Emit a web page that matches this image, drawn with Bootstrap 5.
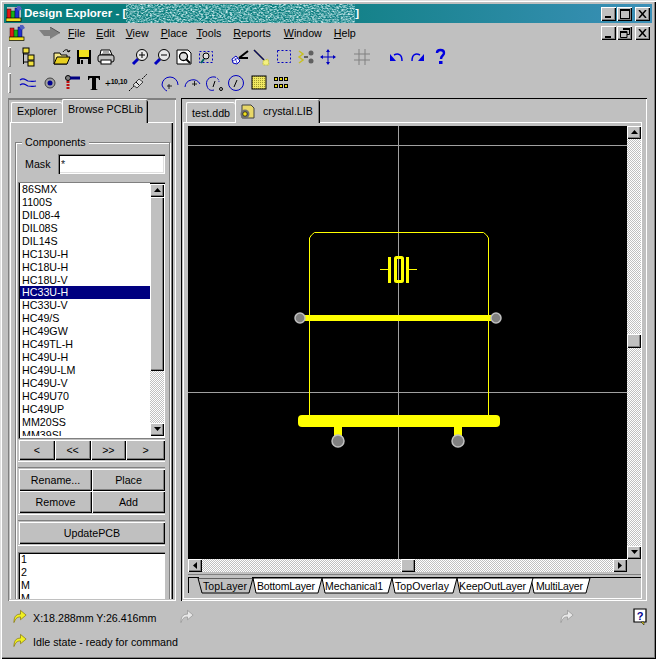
<!DOCTYPE html>
<html lang="en">
<head>
<meta charset="UTF-8">
<title>Design Explorer</title>
<link rel="stylesheet" href="https://cdn.jsdelivr.net/npm/bootstrap@5.3.0/dist/css/bootstrap.min.css">
<style>
html, body { margin: 0; background: #c0c0c0; overflow: hidden; }
body { width: 656px; height: 659px; font: 10.7px/13px "Liberation Sans", Arial, sans-serif; color: #000; }
svg { display: block; flex: none; }
.app-win { width: 656px; height: 659px; padding: 4px; background: #c0c0c0; box-shadow: inset 1px 1px 0 #dfdfdf, inset 2px 2px 0 #fff, inset -1px -1px 0 #000, inset -2px -2px 0 #808080; }
.raised { background: #c0c0c0; box-shadow: inset 1px 1px 0 #fff, inset -1px -1px 0 #000, inset -2px -2px 0 #808080; }

.title-bar { height: 19px; margin-bottom: 1px; padding: 0 2px; background: linear-gradient(90deg, #087d7c 0%, #0d7f80 45%, #3b90b8 100%); color: #fff; font-weight: 700; font-size: 11.5px; line-height: 19px; }
.caption-btn { width: 15px; height: 14px; margin-left: 1px; padding: 0; border: 0; border-radius: 0; display: flex; align-items: center; justify-content: center; }
.caption-btn.gap-left { margin-left: 3px; }

.menu-row { height: 18px; padding: 0 2px 0 5px; }
.menu-item u { text-decoration: underline; }

.tool-row { padding-left: 4px; }
.grip { width: 3px; height: 20px; margin-right: 6px; box-shadow: inset 1px 1px 0 #fff, inset -1px -1px 0 #808080; }
.tool-cell { width: 22px; height: 22px; flex: none; }
.tool-gap { width: 12px; flex: none; }

.panes { height: 503px; margin-top: 3px; }
.pane-left { width: 168px; margin-left: 4px; margin-right: 5px; padding: 0 3px 2px 2px; box-shadow: inset 0 2px 0 #808080, inset 1px 0 0 #808080, inset 0 -1px 0 #fff, inset -1px 0 0 #fff; }
.pane-right { width: 466px; padding: 0 5px 2px 2px; box-shadow: inset 0 1px 0 #000, inset 1px 0 0 #000, inset 0 -1px 0 #fff, inset -1px 0 0 #fff; }

.doc-tabs { height: 24px; padding: 3px 0 0 1px; border: 0; flex-wrap: nowrap; align-items: flex-end; }
.doc-tab { height: 20px; padding: 3px 6px 0; background: #c0c0c0; border-radius: 2px 2px 0 0; box-shadow: inset 1px 0 0 #fff, inset 0 1px 0 #fff; white-space: nowrap; }
.doc-tab.on { height: 24px; margin-bottom: -1px; padding: 5px 6px 0; position: relative; box-shadow: inset 1px 0 0 #fff, inset 0 1px 0 #fff, inset -1px 0 0 #000, inset -2px 0 0 #808080; }
.tab-page { height: 479px; box-shadow: inset 1px 1px 0 #fff, inset -1px 0 0 #000, inset -2px 0 0 #808080; overflow: hidden; }

.comp-group { margin: 20px 0 0 5px; width: 155px; height: 470px; padding: 11px 4px 0 2px; position: relative; border: 1px solid #808080; box-shadow: 1px 1px 0 #fff, inset 1px 1px 0 #fff; }
.comp-legend { position: absolute; top: -7px; left: 6px; padding: 0 3px; background: #c0c0c0; }
.mask-row { height: 20px; }
.mask-input { width: 107px; height: 20px; margin-left: auto; padding: 1px 3px; border: 0; border-radius: 0; font: inherit; box-shadow: inset 1px 1px 0 #808080, inset 2px 2px 0 #000, inset -1px -1px 0 #fff, inset -2px -2px 0 #dfdfdf; }
.list-well { margin-top: 8px; height: 256px; padding: 2px 1px 2px 2px; background: #fff; box-shadow: inset 1px 1px 0 #808080, inset 2px 2px 0 #000, inset -1px -1px 0 #fff; overflow: hidden; }
.comp-list { flex: 1; margin-top: -1px; border-radius: 0; overflow: hidden; }
.comp-item { padding: 0 2px; height: 13px; border: 0; border-radius: 0; background: #fff; color: #000; font-size: inherit; line-height: 13px; white-space: nowrap; }
.comp-item.active { background: #000080; color: #fff; }

.scroll-v { width: 14px; }
.scroll-h { height: 13px; }
.scroll-track { flex: 1; min-width: 0; min-height: 0; background: conic-gradient(#fff 25%, #c0c0c0 0 50%, #fff 0 75%, #c0c0c0 0) 0 0 / 2px 2px; }
.scroll-btn { width: 14px; height: 13px; flex: none; display: flex; align-items: center; justify-content: center; }
.scroll-thumb { flex: none; }

.act-frame { margin-top: 1px; padding: 1px 0 1px 1px; box-shadow: 0 -1px 0 #808080, 0 1px 0 #fff; }
.act-btn { flex: 1 1 0; height: 20px; padding: 0; border: 0; border-radius: 0; font: inherit; color: #000; background: #c0c0c0; box-shadow: inset 1px 1px 0 #fff, inset -1px -1px 0 #000, inset -2px -2px 0 #808080; }
.act-btn:hover { background: #c0c0c0; color: #000; }
.act-tall { height: 22px; }
.pin-well { height: 48px; margin-top: 7px; padding: 1px 3px; background: #fff; box-shadow: inset 1px 1px 0 #808080, inset 2px 2px 0 #000; overflow: hidden; }

.doc-page { height: 479px; padding: 4px 0 0 5px; box-shadow: inset 1px 1px 0 #fff, inset -1px -1px 0 #fff; }
.canvas-box { width: 453px; }

.status-bar { height: 52px; padding: 3px 5px 0 9px; }
.status-line { height: 24px; }
.status-text { margin-left: 5px; padding-top: 4px; width: 147px; font-size: 10.7px; white-space: nowrap; }
</style>
</head>
<body>
<svg width="0" height="0" style="position:absolute">
  <defs>
    <filter id="title-grain" x="0" y="0" width="100%" height="100%">
      <feTurbulence type="fractalNoise" baseFrequency=".45 .7" numOctaves="2" seed="7"/>
      <feColorMatrix values="0 0 0 0 .55  0 0 0 0 .8  0 0 0 0 .82  2.400 0 0 0 -.85"/>
    </filter>
    <symbol id="ico-logo" viewBox="0 0 16 16">
      <rect x="1" y="1" width="14" height="14" fill="#c0c0c0"/>
      <rect x="1" y="3" width="4" height="10" fill="#e01818" stroke="#400" stroke-width=".5"/>
      <rect x="5" y="5" width="4" height="8" fill="#18b018" stroke="#040" stroke-width=".5"/>
      <rect x="9" y="2" width="4" height="11" fill="#2030d0" stroke="#004" stroke-width=".5"/>
      <rect x="0" y="12" width="15" height="3.5" fill="#f0e020" stroke="#000" stroke-width=".7"/>
      <path d="M11 0h3l2 3-3 2-2-2z" fill="#5060c0"/>
    </symbol>
    <symbol id="ico-flow" viewBox="0 0 16 16">
      <path d="M1 15C1 9 3 6 8 6V2l6 5-6 5V9c-3 0-5 1-7 6z"/>
    </symbol>
    <symbol id="ico-up" viewBox="0 0 7 5"><path d="M3.500 0L7 4H0z"/></symbol>
    <symbol id="ico-down" viewBox="0 0 7 5"><path d="M0 0h7L3.500 4z"/></symbol>
    <symbol id="ico-left" viewBox="0 0 5 7"><path d="M4 0v7L0 3.500z"/></symbol>
    <symbol id="ico-right" viewBox="0 0 5 7"><path d="M0 0v7l4-3.500z"/></symbol>
    <symbol id="ico-glass" viewBox="0 0 22 22">
      <path d="M4 18l5-5" stroke="#0000c0" stroke-width="3"/>
      <circle cx="13" cy="9" r="5.500" fill="#e8e8e8" stroke="#000"/>
    </symbol>
    <symbol id="ico-arc" viewBox="0 0 22 22">
      <circle cx="11" cy="11" r="7.500" fill="none" stroke="#0000c0"/>
    </symbol>
  </defs>
</svg>

<div class="app-win d-flex flex-column">

  <div class="title-bar d-flex align-items-center">
    <svg width="16" height="16" style="margin-right:2px"><use href="#ico-logo"/></svg>
    <span>Design Explorer - [</span>
    <svg width="229" height="19"><rect width="229" height="19" filter="url(#title-grain)"/></svg>
    <span>]</span>
    <div class="ms-auto d-flex">
      <button class="btn caption-btn raised" aria-label="Minimize"><svg width="9" height="9"><rect x="1" y="7" width="6" height="2"/></svg></button>
      <button class="btn caption-btn raised" aria-label="Maximize"><svg width="10" height="10"><rect x=".5" y=".5" width="9" height="9" fill="none" stroke="#000"/><rect x="0" y="0" width="10" height="2"/></svg></button>
      <button class="btn caption-btn gap-left raised" aria-label="Close"><svg width="9" height="8"><path d="M1 0l7 8M8 0L1 8" stroke="#000" stroke-width="1.500"/></svg></button>
    </div>
  </div>

  <div class="menu-row d-flex align-items-center">
    <svg width="16" height="16" style="margin-right:14px"><use href="#ico-logo"/></svg>
    <svg width="22" height="12" style="margin-right:7px"><path d="M0 3h11V0l10 6-10 6V9H5z" fill="#808080"/><path d="M11 0l10 6" stroke="#555"/></svg>
    <span class="menu-item" style="margin-right:11px"><u>F</u>ile</span>
    <span class="menu-item" style="margin-right:11px"><u>E</u>dit</span>
    <span class="menu-item" style="margin-right:12px"><u>V</u>iew</span>
    <span class="menu-item" style="margin-right:9px"><u>P</u>lace</span>
    <span class="menu-item" style="margin-right:12px"><u>T</u>ools</span>
    <span class="menu-item" style="margin-right:13px"><u>R</u>eports</span>
    <span class="menu-item" style="margin-right:12px"><u>W</u>indow</span>
    <span class="menu-item"><u>H</u>elp</span>
    <div class="ms-auto d-flex">
      <button class="btn caption-btn raised" aria-label="Minimize"><svg width="9" height="9"><rect x="1" y="7" width="6" height="2"/></svg></button>
      <button class="btn caption-btn raised" aria-label="Restore"><svg width="10" height="10"><path d="M3 .5h6.500v6H7M.5 3.500h6.500v6H.5z" fill="none" stroke="#000"/><path d="M3 0h7v2H3zM0 3h7v2H0z"/></svg></button>
      <button class="btn caption-btn gap-left raised" aria-label="Close"><svg width="9" height="8"><path d="M1 0l7 8M8 0L1 8" stroke="#000" stroke-width="1.500"/></svg></button>
    </div>
  </div>

  <div class="tool-row d-flex align-items-center" style="height:29px">
    <div class="grip"></div>
    <svg class="tool-cell" viewBox="0 0 22 22"><path d="M6.500 3v15M6.500 8h5M6.500 16h5" stroke="#000" fill="none"/><rect x="6" y="2" width="6" height="5" fill="#f0e040" stroke="#000"/><rect x="11" y="9" width="6" height="5" fill="#f0e040" stroke="#000"/><rect x="11" y="15" width="6" height="5" fill="#f0e040" stroke="#000"/></svg>
    <div class="tool-gap"></div>
    <svg class="tool-cell" viewBox="0 0 22 22"><path d="M3 7h6l1 2h6v9H3z" fill="#f4e88c" stroke="#000"/><path d="M3 18l3-7h13l-3 7z" fill="#e8d020" stroke="#000"/><path d="M12 6c2-3 5-3 6 0M18 6l-2-1M18 6l1-2" stroke="#000" fill="none"/></svg>
    <svg class="tool-cell" viewBox="0 0 22 22"><rect x="4" y="4" width="14" height="14" fill="#000"/><rect x="6" y="4" width="10" height="7" fill="#f0e020"/><rect x="7" y="13" width="8" height="5" fill="#c0c0c0"/><rect x="8" y="14" width="2" height="4"/></svg>
    <svg class="tool-cell" viewBox="0 0 22 22"><path d="M6 4h9l2 5H5z" fill="#fff" stroke="#000"/><rect x="3" y="9" width="16" height="7" rx="2" fill="#c0c0c0" stroke="#000"/><rect x="6" y="14" width="10" height="4" fill="#fff" stroke="#000"/><path d="M8 6h6M7 8h8" stroke="#000" stroke-width=".7"/></svg>
    <div class="tool-gap"></div>
    <svg class="tool-cell" viewBox="0 0 22 22"><use href="#ico-glass"/><path d="M10 9h6M13 6v6" stroke="#000"/></svg>
    <svg class="tool-cell" viewBox="0 0 22 22"><use href="#ico-glass"/><path d="M10 9h6" stroke="#000"/></svg>
    <svg class="tool-cell" viewBox="0 0 22 22"><path d="M4 4h11l3 3v11H4z" fill="#fff" stroke="#000"/><circle cx="10.500" cy="10.500" r="4" fill="#dfdfdf" stroke="#000" stroke-width="1.300"/><path d="M13 13l4 4" stroke="#000" stroke-width="2"/></svg>
    <svg class="tool-cell" viewBox="0 0 22 22"><rect x="4.500" y="5.500" width="13" height="11" fill="none" stroke="#0000c0" stroke-dasharray="2 2"/><circle cx="11" cy="10" r="3" fill="#dfdfdf" stroke="#000"/><path d="M9 13l-3 4" stroke="#006060" stroke-width="2"/></svg>
    <div class="tool-gap"></div>
    <svg class="tool-cell" viewBox="0 0 22 22"><path d="M10 12L19 5M10 12h9" stroke="#000" stroke-width="2"/><path d="M3 13l4-3 4 5-3 3-4-1z" fill="#fff" stroke="#0000c0"/><path d="M6 12l2 5M4 15l5-3" stroke="#0000c0" stroke-width=".7"/></svg>
    <svg class="tool-cell" viewBox="0 0 22 22"><path d="M3 4l10 10" stroke="#000" stroke-width="1.500"/><path d="M3 4l10 10" stroke="#0000c0" stroke-width=".6"/><path d="M12 15l5-2 1 6h-6z" fill="#f4f080" stroke="#c0c040" stroke-dasharray="2 1"/></svg>
    <svg class="tool-cell" viewBox="0 0 22 22"><rect x="4.500" y="4.500" width="13" height="12" fill="none" stroke="#0000c0" stroke-dasharray="2 2"/></svg>
    <svg class="tool-cell" viewBox="0 0 22 22"><path d="M4 5l4 3-4 3 4 3-4 3" fill="none" stroke="#c8c020" stroke-width="1.500"/><path d="M9 11h4" stroke="#000"/><circle cx="16" cy="7" r="2.500" fill="#606060"/><circle cx="16" cy="15" r="2.500" fill="#606060"/></svg>
    <svg class="tool-cell" viewBox="0 0 22 22"><path d="M11 4v14M4 11h14" stroke="#0000c0"/><path d="M11 3L9 6h4zM11 19l-2-3h4zM3 11l3-2v4zM19 11l-3-2v4z" fill="#0000c0"/></svg>
    <div class="tool-gap"></div>
    <svg class="tool-cell" viewBox="0 0 22 22"><path d="M8 3v16M14 3v16M3 8h16M3 14h16" stroke="#808080" fill="none"/></svg>
    <div class="tool-gap"></div>
    <svg class="tool-cell" viewBox="0 0 22 22"><path d="M9 9c4-2 8-1 8 6" fill="none" stroke="#0000e0" stroke-width="1.500"/><path d="M5 8v7h6z" fill="#0000e0"/></svg>
    <svg class="tool-cell" viewBox="0 0 22 22"><path d="M13 9c-4-2-8-1-8 6" fill="none" stroke="#0000e0" stroke-width="1.500"/><path d="M17 8v7h-6z" fill="#0000e0"/></svg>
    <svg class="tool-cell" viewBox="0 0 22 22"><path d="M8 7c0-4 7-4 7 0 0 3-3 2-3 6" fill="none" stroke="#0000e0" stroke-width="2.400"/><rect x="10" y="15" width="3.500" height="3" fill="#0000e0"/></svg>
  </div>

  <div class="tool-row d-flex align-items-center" style="height:24px">
    <div class="grip"></div>
    <svg class="tool-cell" viewBox="0 0 22 22"><path d="M3 8c4-3 5 0 8 1 3 0 4 1 8 0M3 13c4-3 5 0 8 1 3 0 4 1 8 0" fill="none" stroke="#0000c0" stroke-width="1.200"/></svg>
    <svg class="tool-cell" viewBox="0 0 22 22"><circle cx="11" cy="11" r="5" fill="#a0a0a0" stroke="#404040"/><circle cx="11" cy="11" r="2.500" fill="#000090"/></svg>
    <svg class="tool-cell" viewBox="0 0 22 22"><circle cx="7" cy="6" r="2.500" fill="#808080" stroke="#000"/><path d="M9 6h10" stroke="#000080" stroke-width="3"/><path d="M7 9v9" stroke="#c01010" stroke-width="3" stroke-dasharray="2 1"/></svg>
    <svg class="tool-cell" viewBox="0 0 22 22"><path d="M5 4h12v4h-1c0-2-1-2-3-2v11l2 1H7l2-1V6C7 6 6 6 6 8H5z"/></svg>
    <div class="tool-cell d-flex align-items-center" style="font-size:7px;font-weight:700;letter-spacing:-.2px"><span style="font-size:10px;font-weight:400">+</span><span style="margin-top:-3px">10,10</span></div>
    <svg class="tool-cell" viewBox="0 0 22 22"><path d="M2 19l5-5M15 7l5-5" stroke="#000" stroke-dasharray="2 1"/><path d="M6 13l6-6 4 3-6 6z" fill="#dfdfdf" stroke="#404040"/><path d="M9 10l3 3" stroke="#000"/></svg>
    <div style="width:10px;flex:none"></div>
    <svg class="tool-cell" viewBox="0 0 22 22"><path d="M3 13a8 8 0 0 1 16 0" fill="none" stroke="#0000c0"/><path d="M3 13c1 3 3 5 5 6" fill="none" stroke="#0000c0"/><path d="M8 14h5M10 12v5" stroke="#000" stroke-width=".8"/></svg>
    <svg class="tool-cell" viewBox="0 0 22 22"><path d="M4 15a8 8 0 0 1 15-3" fill="none" stroke="#0000c0"/><path d="M11 12h5M13.500 9v5" stroke="#000" stroke-width=".8"/></svg>
    <svg class="tool-cell" viewBox="0 0 22 22"><path d="M12 5C6 4 2 9 4 14c1 4 4 5 7 4" fill="none" stroke="#0000c0"/><path d="M12 5c3 1 4 3 4 5" fill="none" stroke="#0000c0" stroke-dasharray="1 1"/><path d="M10 15l2-6" stroke="#000"/><circle cx="18" cy="17" r="1.500" fill="none" stroke="#000"/></svg>
    <svg class="tool-cell" viewBox="0 0 22 22"><use href="#ico-arc"/><path d="M9 15l3-7" stroke="#000"/></svg>
    <div style="width:1px;flex:none"></div>
    <svg class="tool-cell" viewBox="0 0 22 22"><defs><pattern id="dots-fill" width="2" height="2" patternUnits="userSpaceOnUse"><rect width="2" height="2" fill="#f0e860"/><rect width="1" height="1" fill="#a09830"/></pattern></defs><rect x="4" y="4" width="14" height="13" fill="url(#dots-fill)" stroke="#000"/></svg>
    <svg class="tool-cell" viewBox="0 0 22 22"><g fill="#e8d818" stroke="#000"><rect x="4.500" y="5.500" width="3" height="3"/><rect x="9.500" y="5.500" width="3" height="3"/><rect x="14.500" y="5.500" width="3" height="3"/><rect x="4.500" y="12.500" width="3" height="3"/><rect x="9.500" y="12.500" width="3" height="3"/><rect x="14.500" y="12.500" width="3" height="3"/></g></svg>
  </div>

  <div class="panes d-flex">
    <div class="pane-left flex-none d-flex flex-column">
      <ul class="nav doc-tabs" style="padding-top:2px">
        <li class="nav-item doc-tab" style="width:51px;height:20px">Explorer</li>
        <li class="nav-item doc-tab on" style="width:86px;padding-top:4px">Browse PCBLib</li>
      </ul>
      <div class="tab-page">
        <div class="comp-group d-flex flex-column">
          <span class="comp-legend">Components</span>
          <div class="mask-row d-flex align-items-center">
            <label style="margin-left:7px">Mask</label>
            <input class="form-control mask-input" value="*">
          </div>
          <div class="list-well d-flex">
            <ul class="list-group comp-list">
              <li class="list-group-item comp-item">86SMX</li>
              <li class="list-group-item comp-item">1100S</li>
              <li class="list-group-item comp-item">DIL08-4</li>
              <li class="list-group-item comp-item">DIL08S</li>
              <li class="list-group-item comp-item">DIL14S</li>
              <li class="list-group-item comp-item">HC13U-H</li>
              <li class="list-group-item comp-item">HC18U-H</li>
              <li class="list-group-item comp-item">HC18U-V</li>
              <li class="list-group-item comp-item active">HC33U-H</li>
              <li class="list-group-item comp-item">HC33U-V</li>
              <li class="list-group-item comp-item">HC49/S</li>
              <li class="list-group-item comp-item">HC49GW</li>
              <li class="list-group-item comp-item">HC49TL-H</li>
              <li class="list-group-item comp-item">HC49U-H</li>
              <li class="list-group-item comp-item">HC49U-LM</li>
              <li class="list-group-item comp-item">HC49U-V</li>
              <li class="list-group-item comp-item">HC49U70</li>
              <li class="list-group-item comp-item">HC49UP</li>
              <li class="list-group-item comp-item">MM20SS</li>
              <li class="list-group-item comp-item">MM39SL</li>
            </ul>
            <div class="scroll-v d-flex flex-column">
              <div class="scroll-btn raised"><svg width="7" height="5"><use href="#ico-up"/></svg></div>
              <div class="raised scroll-thumb" style="height:174px"></div>
              <div class="scroll-track"></div>
              <div class="scroll-btn raised"><svg width="7" height="5"><use href="#ico-down"/></svg></div>
            </div>
          </div>
          <div class="act-frame d-flex">
            <button class="btn act-btn" style="flex:36">&lt;</button>
            <button class="btn act-btn" style="flex:36">&lt;&lt;</button>
            <button class="btn act-btn" style="flex:36">&gt;&gt;</button>
            <button class="btn act-btn" style="flex:39">&gt;</button>
          </div>
          <div class="act-frame" style="margin-top:7px">
            <div class="d-flex">
              <button class="btn act-btn act-tall">Rename...</button>
              <button class="btn act-btn act-tall">Place</button>
            </div>
            <div class="d-flex">
              <button class="btn act-btn act-tall">Remove</button>
              <button class="btn act-btn act-tall">Add</button>
            </div>
          </div>
          <div class="act-frame d-flex" style="margin-top:7px">
            <button class="btn act-btn act-tall">UpdatePCB</button>
          </div>
          <div class="pin-well">1<br>2<br>M<br>M</div>
        </div>
      </div>
    </div>

    <div class="pane-right flex-none d-flex flex-column">
      <ul class="nav doc-tabs" style="padding-top:3px">
        <li class="nav-item doc-tab" style="width:49px;margin-left:2px;padding-top:5px">test.ddb</li>
        <li class="nav-item doc-tab on d-flex" style="width:85px;padding-top:6px">
          <svg width="16" height="16" style="margin:-1px 8px 0 -2px"><path d="M3 1h9l3 3v10H3z" fill="#e8d868" stroke="#404040"/><circle cx="6" cy="10" r="4.500" fill="#707070"/><circle cx="6" cy="10" r="2.200" fill="#f0e020" stroke="#000" stroke-width=".6"/></svg>
          <span>crystal.LIB</span>
        </li>
      </ul>
      <div class="doc-page">
        <div class="canvas-box d-flex flex-column">
          <div class="d-flex">
            <svg width="439" height="433" viewBox="188 126 439 433" style="background:#000">
              <g stroke="#a0a0a0" fill="none">
                <path d="M398.500 126v434M188 392.500h439M188 145.500h439"/>
              </g>
              <path d="M309.500 415V238l2-3 3-2.500h169l3 2.500 2 3v177" fill="none" stroke="#ff0" stroke-width="1"/>
              <rect x="304" y="315" width="188" height="6" fill="#ff0"/>
              <rect x="298" y="415" width="202" height="12" rx="4" fill="#ff0"/>
              <rect x="334" y="427" width="8" height="10" fill="#ff0"/>
              <rect x="454" y="427" width="8" height="10" fill="#ff0"/>
              <g fill="#ff0">
                <rect x="388" y="257" width="3" height="26"/>
                <rect x="406" y="257" width="3" height="26"/>
                <rect x="380" y="269" width="8" height="1"/>
                <rect x="409" y="269" width="8" height="1"/>
              </g>
              <rect x="395.500" y="257.500" width="7" height="24" rx="1" fill="none" stroke="#ff0" stroke-width="3"/>
              <g fill="#808080" stroke="#c0c0c0" stroke-width="1.500">
                <circle cx="300" cy="318" r="5"/>
                <circle cx="496" cy="318" r="5"/>
                <circle cx="338" cy="441" r="6"/>
                <circle cx="458" cy="441" r="6"/>
              </g>
            </svg>
            <div class="scroll-v d-flex flex-column" style="height:433px">
              <div class="scroll-btn raised"><svg width="7" height="5"><use href="#ico-up"/></svg></div>
              <div class="scroll-track"></div>
              <div class="raised scroll-thumb" style="height:14px"></div>
              <div class="scroll-track" style="flex:none;height:198px"></div>
              <div class="scroll-btn raised"><svg width="7" height="5"><use href="#ico-down"/></svg></div>
            </div>
          </div>
          <div class="scroll-h d-flex" style="width:439px">
            <div class="scroll-btn raised"><svg width="5" height="7"><use href="#ico-left"/></svg></div>
            <div class="scroll-track"></div>
            <div class="raised scroll-thumb" style="width:14px"></div>
            <div class="scroll-track"></div>
            <div class="scroll-btn raised"><svg width="5" height="7"><use href="#ico-right"/></svg></div>
          </div>
          <svg width="453" height="22" viewBox="188 572 453 22" font-family="Liberation Sans, Arial, sans-serif" font-size="10.500">
            <path d="M188 574.500h453" stroke="#808080"/>
            <path d="M188 577.500h453" stroke="#000"/>
            <path d="M188.500 578v15" stroke="#000"/>
            <g fill="#fff" stroke="#000">
              <path d="M590 578l-4 15h-52l-3-15z"/>
              <path d="M533 578l-4 15h-69l-3-15z"/>
              <path d="M457 578l-4 15h-58l-3-15z"/>
              <path d="M392 578l-4 15h-63l-3-15z"/>
              <path d="M322 578l-4 15h-62l-3-15z"/>
            </g>
            <path d="M198 578l4 15h47l4-15z" fill="#c0c0c0" stroke="#000"/>
            <path d="M199 577.500h53" stroke="#c0c0c0"/>
            <text x="203" y="590" textLength="44">TopLayer</text>
            <text x="257" y="590" textLength="58">BottomLayer</text>
            <text x="325" y="590" textLength="58">Mechanical1</text>
            <text x="395" y="590" textLength="54">TopOverlay</text>
            <text x="459" y="590" textLength="67">KeepOutLayer</text>
            <text x="536" y="590" textLength="47">MultiLayer</text>
          </svg>
        </div>
      </div>
    </div>
  </div>

  <div class="status-bar d-flex flex-column">
    <div class="status-line d-flex align-items-center">
      <svg width="15" height="16" fill="#f0f020" stroke="#807000" stroke-width=".7"><use href="#ico-flow"/></svg>
      <span class="status-text">X:18.288mm Y:26.416mm</span>
      <svg width="15" height="16" fill="#e8e8e8" stroke="#909090" stroke-width=".7"><use href="#ico-flow"/></svg>
      <svg width="15" height="16" fill="#e8e8e8" stroke="#909090" stroke-width=".7" style="margin-left:365px"><use href="#ico-flow"/></svg>
      <svg width="14" height="17" class="ms-auto"><path d="M1 1h12v13H1z" fill="#fff" stroke="#000" stroke-width="1.200"/><path d="M8 14h3v3z" fill="#f0e020" stroke="#000" stroke-width=".5"/><text x="7" y="12" text-anchor="middle" font-family="Liberation Sans, Arial, sans-serif" font-size="11" font-weight="700" fill="#000090">?</text></svg>
    </div>
    <div class="status-line d-flex align-items-center">
      <svg width="15" height="16" fill="#f0f020" stroke="#807000" stroke-width=".7"><use href="#ico-flow"/></svg>
      <span class="status-text" style="width:auto">Idle state - ready for command</span>
    </div>
  </div>

</div>
<script src="https://cdn.jsdelivr.net/npm/bootstrap@5.3.0/dist/js/bootstrap.bundle.min.js"></script>
</body>
</html>
